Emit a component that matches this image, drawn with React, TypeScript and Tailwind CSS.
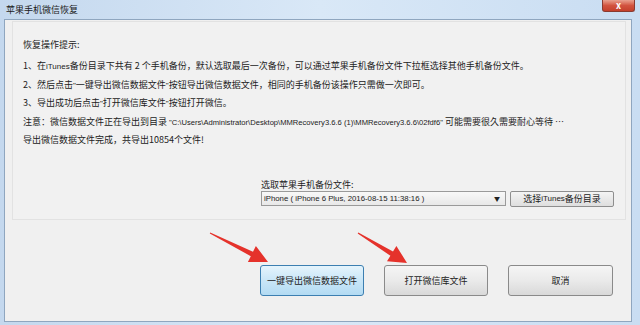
import React from "react";

const font = { fontFamily: '"Noto Sans CJK SC", "Noto Sans", sans-serif' };
const latin = { fontFamily: '"Liberation Sans", "Noto Sans CJK SC", sans-serif' };

function Arrows() {
  return (
    <svg
      className="pointer-events-none absolute inset-0"
      width={640}
      height={325}
      viewBox="0 0 640 325"
    >
      <polygon
        fill="#e5322b"
        points="209.8,233.4 250.8,256.2 247.9,262 268,262 255.9,245.9 253,251.7 210.2,232.6"
      />
      <polygon
        fill="#e5322b"
        points="357.7,233.4 390.4,255.7 387,261.3 407,263 396.4,245.9 393,251.5 358.3,232.6"
      />
    </svg>
  );
}

function L({ children }: { children: React.ReactNode }) {
  return (
    <span className="text-[8px]" style={latin}>
      {children}
    </span>
  );
}

export default function App() {
  return (
    <div
      className="relative flex h-[325px] w-[640px] flex-col bg-gradient-to-r from-[#c4d8ee] via-[#d9e8f7] to-[#c9ddf2] text-[#222]"
      style={font}
    >
      {/* title bar */}
      <div className="flex h-[19px] shrink-0 items-center justify-between pl-[6px] pr-[5px]">
        <span className="text-[9px] leading-none text-[#1a1a1a]">苹果手机微信恢复</span>
        <div className="flex h-[12px] w-[33px] items-center justify-center self-start rounded-b-[3px] border border-t-0 border-[#8a3a30] bg-gradient-to-b from-[#e8a08f] via-[#d2533f] to-[#c4402c] text-[9px] font-bold leading-none text-white">
          x
        </div>
      </div>

      {/* client area */}
      <div className="ml-[4px] mr-[8px] mb-[3px] flex flex-1 flex-col border border-[#8fa6bf] bg-[#f0f0f0]">
        {/* group */}
        <div className="ml-[7px] mr-[5px] mt-[1px] flex h-[199px] flex-col border border-[#e2e2e2] bg-[#f1f1f1] pl-[10px] pt-[14px]">
          <div className="text-[9px] leading-[18px]">恢复操作提示:</div>
          <div className="mt-[3px] flex flex-col whitespace-nowrap text-[9px] leading-[17.6px]">
            <div>
              1、在<L>iTunes</L>备份目录下共有 2 个手机备份，默认选取最后一次备份，可以通过苹果手机备份文件下拉框选择其他手机备份文件。
            </div>
            <div>
              2、然后点击<L>"</L>一键导出微信数据文件<L>"</L>按钮导出微信数据文件，相同的手机备份该操作只需做一次即可。
            </div>
            <div>
              3、导出成功后点击<L>"</L>打开微信库文件<L>"</L>按钮打开微信。
            </div>
            <div>
              注意：微信数据文件正在导出到目录{" "}
              <span className="text-[7.6px]" style={latin}>
                "C:\Users\Administrator\Desktop\MMRecovery3.6.6 (1)\MMRecovery3.6.6\02fdf6"
              </span>{" "}
              可能需要很久需要耐心等待 …
            </div>
            <div>导出微信数据文件完成，共导出10854个文件!</div>
          </div>

          <div className="mt-[30px] flex flex-col pl-[238px]">
            <div className="text-[9px] leading-[12px]">选取苹果手机备份文件:</div>
            <div className="flex items-center gap-[4px]">
              <div className="flex h-[15px] w-[245px] items-center justify-between border border-[#9a9a9a] bg-gradient-to-b from-[#f8f8f8] to-[#e8e8e8] pl-[2px] pr-[5px]">
                <span className="text-[7.8px] leading-none" style={latin}>
                  iPhone ( iPhone 6 Plus, 2016-08-15 11:38:16 )
                </span>
                <span className="text-[6px] leading-none">▼</span>
              </div>
              <div className="flex h-[16px] w-[104px] items-center justify-center rounded-[2px] border border-[#8e8e8e] bg-gradient-to-b from-[#f4f4f4] to-[#dedede] text-[9px] leading-none">
                选择<L>iTunes</L>备份目录
              </div>
            </div>
          </div>
        </div>

        {/* bottom buttons */}
        <div className="mr-[18px] mt-[45px] flex justify-end gap-[20px]">
          <div className="flex h-[31px] w-[104px] items-center justify-center rounded-[3px] border border-[#3c7fb1] bg-gradient-to-b from-[#e5f4fc] via-[#c9e6f7] to-[#b3dbf3] text-[9px] leading-none">
            一键导出微信数据文件
          </div>
          <div className="flex h-[31px] w-[104px] items-center justify-center rounded-[3px] border border-[#8a8a8a] bg-gradient-to-b from-[#f5f5f5] via-[#eaeaea] to-[#d9d9d9] text-[9px] leading-none">
            打开微信库文件
          </div>
          <div className="flex h-[31px] w-[105px] items-center justify-center rounded-[3px] border border-[#8a8a8a] bg-gradient-to-b from-[#f5f5f5] via-[#eaeaea] to-[#d9d9d9] text-[9px] leading-none">
            取消
          </div>
        </div>
      </div>

      <Arrows />
    </div>
  );
}
